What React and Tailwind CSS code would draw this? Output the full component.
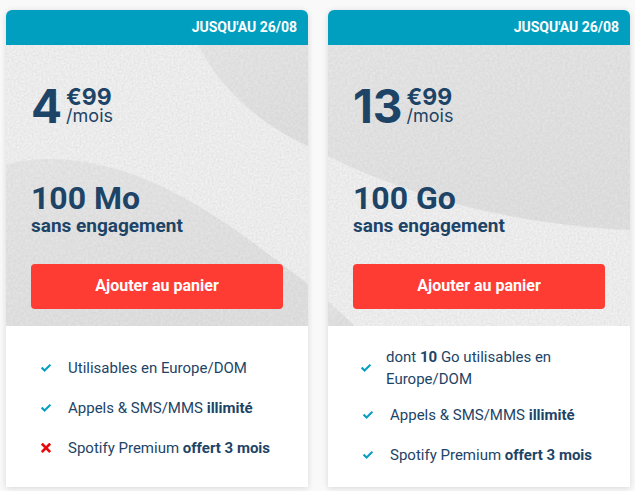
import React from "react";

function Check() {
  return (
    <svg width="10" height="10" viewBox="0 0 10 10" aria-hidden="true">
      <path d="M0.6 4.6 L3.6 7.5 L9.4 1.7" fill="none" stroke="#049fc1" strokeWidth="2.1" />
    </svg>
  );
}

function Cross() {
  return (
    <svg width="10" height="10" viewBox="0 0 10 10" aria-hidden="true">
      <path d="M0.8 0.6 L9.2 9 M9.2 0.6 L0.8 9" fill="none" stroke="#e8090d" strokeWidth="2.6" />
    </svg>
  );
}

// Grainy paper backdrop: light base with smoother, darker curved areas on top.
function Backdrop({ id, shapes }) {
  return (
    <svg
      className="absolute inset-0 h-full w-full"
      viewBox="0 0 302 281"
      preserveAspectRatio="none"
      aria-hidden="true"
    >
      <defs>
        <filter id={`${id}-coarse`} x="0" y="0" width="100%" height="100%" colorInterpolationFilters="sRGB">
          <feTurbulence type="fractalNoise" baseFrequency="0.5" numOctaves="2" seed="4" />
          <feColorMatrix values="0.1 0 0 0 0.872  0.1 0 0 0 0.872  0.1 0 0 0 0.872  0 0 0 0 1" />
        </filter>
        <filter id={`${id}-fine`} x="0" y="0" width="100%" height="100%" colorInterpolationFilters="sRGB">
          <feTurbulence type="fractalNoise" baseFrequency="0.4" numOctaves="2" seed="9" result="noise" />
          <feColorMatrix in="noise" values="0 0 0 0 0  0 0 0 0 0  0 0 0 0 0  0.07 0 0 0 -0.015" result="grain" />
          <feComposite in="grain" in2="SourceAlpha" operator="in" result="clipped" />
          <feMerge>
            <feMergeNode in="SourceGraphic" />
            <feMergeNode in="clipped" />
          </feMerge>
        </filter>
        <linearGradient id={`${id}-shade`} x1="0" y1="0" x2="0.5" y2="1">
          <stop offset="0" stopColor="#e7e7e7" />
          <stop offset="1" stopColor="#e1e1e1" />
        </linearGradient>
      </defs>
      <rect width="302" height="281" filter={`url(#${id}-coarse)`} />
      {shapes.map((d) => (
        <path key={d} d={d} fill={`url(#${id}-shade)`} filter={`url(#${id}-fine)`} />
      ))}
    </svg>
  );
}

const offers = [
  {
    id: "mo",
    euros: "4",
    volume: "100 Mo",
    shapes: [
      "M192 0 C213 42 253 79 302 101 V0 Z",
      "M0 120 C16 114 34 114 50 114 C150 118 231 185 302 239 V281 H0 Z",
    ],
    features: [
      { icon: "check", text: "Utilisables en Europe/DOM" },
      { icon: "check", text: "Appels & SMS/MMS ", strong: "illimité" },
      { icon: "cross", text: "Spotify Premium ", strong: "offert 3 mois" },
    ],
  },
  {
    id: "go",
    euros: "13",
    volume: "100 Go",
    shapes: [
      "M0 0 H302 V185 C194 180 90 156 0 111 Z",
      "M0 256 L27 281 H0 Z",
    ],
    features: [
      { icon: "check", text: "dont ", strong: "10", after: " Go utilisables en Europe/DOM", long: true },
      { icon: "check", text: "Appels & SMS/MMS ", strong: "illimité" },
      { icon: "check", text: "Spotify Premium ", strong: "offert 3 mois" },
    ],
  },
];

function OfferCard({ offer }) {
  return (
    <article className="flex flex-col rounded-t-md bg-white shadow-[0_1px_6px_rgba(0,0,0,0.14)]">
      <p className="rounded-t-md bg-[#009fc0] pr-[11px] text-right text-sm leading-[35px] font-bold text-white">
        JUSQU'AU 26/08
      </p>
      <div className="relative">
        <Backdrop id={offer.id} shapes={offer.shapes} />
        <div className="relative px-[25px] pt-9 pb-[17px]">
          <div className="flex items-start gap-1 font-['Inter',sans-serif]">
            <span className="text-[46px] leading-[50px] font-bold">{offer.euros}</span>
            <div className="pt-[7px]">
              <p className="text-[23px] leading-[18px] font-bold">€99</p>
              <p className="text-lg leading-5">/mois</p>
            </div>
          </div>
          <h2 className="mt-[51px] text-[32px] leading-8 font-bold">{offer.volume}</h2>
          <p className="text-[19px] leading-6 font-bold">sans engagement</p>
          <button
            type="button"
            className="mt-[26px] block h-[45px] w-full cursor-pointer rounded bg-[#ff3c33] pb-0.5 text-base font-bold text-white"
          >
            Ajouter au panier
          </button>
        </div>
      </div>
      <ul className="flex flex-1 flex-col px-5 pt-5 pb-3">
        {offer.features.map((f) => (
          <li
            key={f.text}
            className={f.long ? "mb-[5px] flex items-center" : "flex min-h-10 items-center first:mt-0.5"}
          >
            <span className={f.long ? "flex w-9 shrink-0 justify-center" : "flex w-10 shrink-0 justify-center"}>
              {f.icon === "check" ? <Check /> : <Cross />}
            </span>
            <span className="ml-0.5 text-[15px] leading-[22px]">
              {f.text}
              {f.strong && <strong className="font-bold">{f.strong}</strong>}
              {f.after}
            </span>
          </li>
        ))}
      </ul>
    </article>
  );
}

export default function App() {
  return (
    <main className="min-h-screen bg-[#f9f9f9] pt-2.5 pr-[5px] pb-1 pl-1.5 font-['Roboto',sans-serif] text-[#1d4466]">
      <div className="grid grid-cols-2 gap-5">
        {offers.map((o) => (
          <OfferCard key={o.id} offer={o} />
        ))}
      </div>
    </main>
  );
}
